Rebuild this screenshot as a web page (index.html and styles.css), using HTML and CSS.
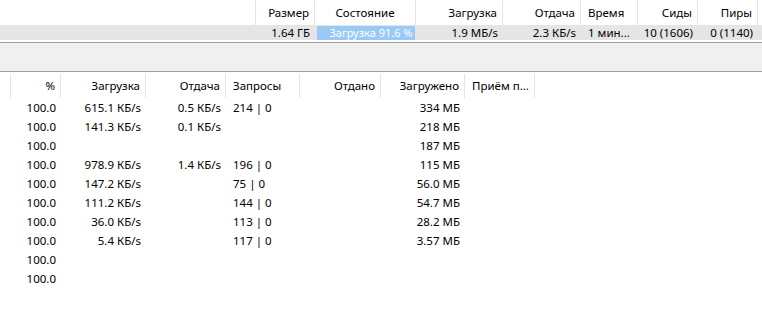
FILE: index.html
```html
<!DOCTYPE html>
<html lang="ru">
<head>
<meta charset="UTF-8" />
<title>Торренты</title>
<link rel="stylesheet" href="styles.css">
</head>
<body>

<section class="pane top-pane">
  <div class="row top-cols head">
    <div class="cell"></div>
    <div class="cell r">Размер</div>
    <div class="cell c">Состояние</div>
    <div class="cell r">Загрузка</div>
    <div class="cell r">Отдача</div>
    <div class="cell l">Время</div>
    <div class="cell r">Сиды</div>
    <div class="cell r">Пиры</div>
    <div class="cell"></div>
  </div>
  <div class="row top-cols torrent">
    <div class="cell"></div>
    <div class="cell r">1.64 ГБ</div>
    <div class="cell bar-cell">
      <div class="progress">Загрузка 91.6 %</div>
    </div>
    <div class="cell r">1.9 МБ/s</div>
    <div class="cell r">2.3 КБ/s</div>
    <div class="cell l">1 мин...</div>
    <div class="cell r">10 (1606)</div>
    <div class="cell r">0 (1140)</div>
    <div class="cell"></div>
  </div>
</section>

<div class="splitter"></div>

<section class="pane bottom-pane">
  <div class="row peer-cols head">
    <div class="cell"></div>
    <div class="cell r">%</div>
    <div class="cell r">Загрузка</div>
    <div class="cell r">Отдача</div>
    <div class="cell l">Запросы</div>
    <div class="cell r">Отдано</div>
    <div class="cell r">Загружено</div>
    <div class="cell l">Приём п...</div>
    <div class="cell"></div>
  </div>

  <div class="rows">
    <div class="row peer-cols"><div></div><div class="r">100.0</div><div class="r">615.1 КБ/s</div><div class="r">0.5 КБ/s</div><div class="l">214 | 0</div><div></div><div class="r">334 МБ</div><div></div><div></div></div>
    <div class="row peer-cols"><div></div><div class="r">100.0</div><div class="r">141.3 КБ/s</div><div class="r">0.1 КБ/s</div><div class="l"></div><div></div><div class="r">218 МБ</div><div></div><div></div></div>
    <div class="row peer-cols"><div></div><div class="r">100.0</div><div class="r"></div><div class="r"></div><div class="l"></div><div></div><div class="r">187 МБ</div><div></div><div></div></div>
    <div class="row peer-cols"><div></div><div class="r">100.0</div><div class="r">978.9 КБ/s</div><div class="r">1.4 КБ/s</div><div class="l">196 | 0</div><div></div><div class="r">115 МБ</div><div></div><div></div></div>
    <div class="row peer-cols"><div></div><div class="r">100.0</div><div class="r">147.2 КБ/s</div><div class="r"></div><div class="l">75 | 0</div><div></div><div class="r">56.0 МБ</div><div></div><div></div></div>
    <div class="row peer-cols"><div></div><div class="r">100.0</div><div class="r">111.2 КБ/s</div><div class="r"></div><div class="l">144 | 0</div><div></div><div class="r">54.7 МБ</div><div></div><div></div></div>
    <div class="row peer-cols"><div></div><div class="r">100.0</div><div class="r">36.0 КБ/s</div><div class="r"></div><div class="l">113 | 0</div><div></div><div class="r">28.2 МБ</div><div></div><div></div></div>
    <div class="row peer-cols"><div></div><div class="r">100.0</div><div class="r">5.4 КБ/s</div><div class="r"></div><div class="l">117 | 0</div><div></div><div class="r">3.57 МБ</div><div></div><div></div></div>
    <div class="row peer-cols"><div></div><div class="r">100.0</div><div></div><div></div><div></div><div></div><div></div><div></div><div></div></div>
    <div class="row peer-cols"><div></div><div class="r">100.0</div><div></div><div></div><div></div><div></div><div></div><div></div><div></div></div>
  </div>
</section>

</body>
</html>
```

FILE: styles.css
```css
* {
  box-sizing: border-box;
}
body {
  margin: 0;
  font-family: 'Segoe UI', 'Noto Sans', sans-serif;
  font-size: 11.5px;
  color: #000;
  background-color: #f0f0f0;
  height: 324px;
  display: flex;
  flex-direction: column;
  overflow: hidden;
}

.pane {
  background-color: #fff;
}

.top-pane {
  height: 43px;
  border-bottom: 1px solid #a0a0a0;
}

.splitter {
  height: 28px;
}

.bottom-pane {
  flex: 1;
  border-top: 1px solid #a0a0a0;
}

.row {
  display: grid;
  align-items: center;
  white-space: nowrap;
}
.row > div {
  padding: 0 5px;
  overflow: hidden;
}

.top-cols {
  grid-template-columns: 256px 59px 101px 87px 78px 57px 60px 60px 1fr;
}
.peer-cols {
  grid-template-columns: 11px 50px 85px 80px 74px 81px 84px 70px 1fr;
}

.head {
  height: 25px;
}
.head .cell {
  height: 100%;
  display: flex;
  align-items: center;
  border-right: 1px solid #e5e5e5;
}
.head .cell:last-child {
  border-right: none;
}
.head .r {
  justify-content: flex-end;
}
.head .c {
  justify-content: center;
}

.bottom-pane .head {
  height: 26px;
}
.bottom-pane .head .cell {
  height: 24px;
  margin-top: 1px;
}

.r {
  text-align: right;
}
.l {
  padding-left: 7px !important;
}

.torrent {
  height: 15px;
  background-color: #e5e5e5;
}
.torrent .cell {
  line-height: 15px;
}
.torrent .bar-cell {
  padding: 0 1px 0 2px;
}

.progress {
  height: 14px;
  background-color: #99c9f5;
  color: #fff;
  line-height: 14px;
  text-align: center;
  font-size: 11px;
  padding-left: 10px;
}

.rows .row {
  height: 19px;
}
```
